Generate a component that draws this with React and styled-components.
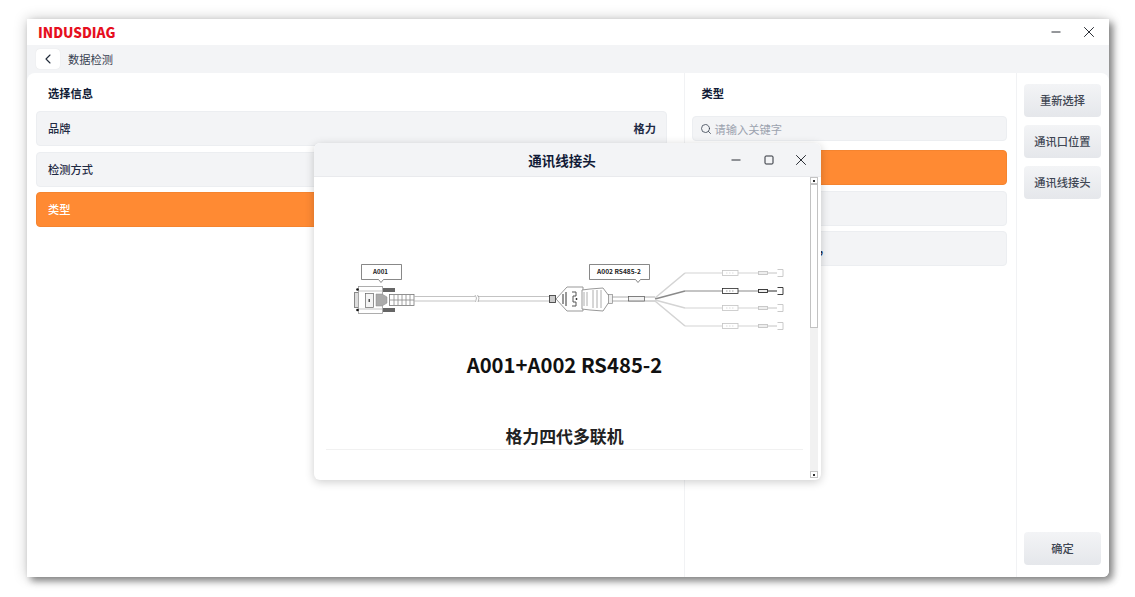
import React from 'react';
import styled, { createGlobalStyle } from 'styled-components';
import { ChevronLeft, Search } from 'lucide-react';

const GlobalStyle = createGlobalStyle`
  html, body {
    margin: 0;
    padding: 0;
    background: #fff;
    font-family: "Noto Sans CJK SC", "Noto Sans", sans-serif;
  }
  * { box-sizing: border-box; }
`;

const Page = styled.div`
  width: 1135px;
  height: 597px;
  padding: 19px 0 0 27px;
  overflow: hidden;
`;

const Window = styled.div`
  position: relative;
  width: 1082px;
  height: 558px;
  display: flex;
  flex-direction: column;
  background: #f3f4f6;
  border-radius: 0 0 6px 0;
  box-shadow: 4px 4px 7px rgba(0, 0, 0, 0.42), 0 0 14px rgba(0, 0, 0, 0.22);
`;

const TitleBar = styled.div`
  height: 26px;
  display: flex;
  align-items: center;
  justify-content: space-between;
  padding: 0 14px 0 11px;
  background: #fff;
`;

const Logo = styled.div`
  font-size: 13.6px;
  line-height: 24px;
  font-weight: 900;
  color: #e60f1e;
`;

const WinControls = styled.div`
  display: flex;
  align-items: center;
  gap: ${(p) => p.$gap}px;
`;

const WinIcon = styled.svg`
  display: block;
  width: 12px;
  height: 12px;
  fill: none;
  stroke: #2b2f36;
  stroke-width: 1;
`;

const SubBar = styled.div`
  height: 28px;
  display: flex;
  align-items: center;
  gap: 8px;
  padding: 0 0 0 9px;
`;

const BackButton = styled.div`
  width: 24px;
  height: 20px;
  display: flex;
  align-items: center;
  justify-content: center;
  background: #fff;
  border-radius: 4px;
  color: #1f2937;
  box-shadow: 0 0 1px rgba(0, 0, 0, 0.12);
`;

const SubTitle = styled.div`
  font-size: 11.25px;
  color: #374151;
`;

const Main = styled.div`
  flex: 1;
  display: flex;
  background: #fff;
  border-radius: 8px 8px 6px 0;
`;

const Panel = styled.div`
  width: ${(p) => p.$width}px;
  padding: ${(p) => p.$padding};
  border-right: 1px solid #f1f2f4;
`;

const Heading = styled.div`
  height: ${(p) => p.$height}px;
  padding: 1px 0 ${(p) => p.$height - 38}px ${(p) => p.$indent}px;
  display: flex;
  align-items: center;
  font-size: 11.25px;
  font-weight: 700;
  color: #111b36;
`;

const List = styled.div`
  display: flex;
  flex-direction: column;
  gap: 5.5px;
`;

const Row = styled.div`
  height: 35px;
  display: flex;
  align-items: center;
  justify-content: space-between;
  padding: 0 10px 1px 11px;
  border-radius: 4px;
  font-size: 11.25px;
  font-weight: 500;
  color: ${(p) => (p.$active ? '#fff' : '#1f2a44')};
  background: ${(p) => (p.$active ? '#ff8a33' : '#f3f4f6')};
  border: 1px solid ${(p) => (p.$active ? '#f5842f' : '#eceef1')};
`;

const RowValue = styled.span`
  font-weight: 700;
`;

const HiddenTail = styled.span`
  padding-left: 116px;
  color: #1f2a44;
  font-weight: 700;
`;

const SearchBox = styled.div`
  height: 25px;
  margin-bottom: 9px;
  display: flex;
  align-items: center;
  gap: 3px;
  padding: 0 7px;
  background: #f3f4f6;
  border: 1px solid #eceef1;
  border-radius: 4px;
  color: #374151;
  font-size: 11.25px;
`;

const Placeholder = styled.span`
  color: #9ca3af;
`;

const Actions = styled.div`
  flex: 1;
  display: flex;
  flex-direction: column;
  gap: 8.5px;
  padding: 11px 8px 12.5px 7px;
`;

const ActionButton = styled.div`
  height: 32.5px;
  flex-shrink: 0;
  display: flex;
  align-items: center;
  justify-content: center;
  margin-top: ${(p) => (p.$bottom ? 'auto' : '0')};
  border-radius: 4px;
  background: linear-gradient(180deg, #f3f4f6 0%, #e5e7eb 100%);
  font-size: 11.25px;
  font-weight: 500;
  color: #3f4653;
`;

const Modal = styled.div`
  position: absolute;
  left: 287px;
  top: 124px;
  width: 507px;
  height: 337px;
  display: flex;
  flex-direction: column;
  background: #fff;
  border-radius: 6px;
  overflow: hidden;
  box-shadow: 0 2px 10px rgba(0, 0, 0, 0.2);
`;

const ModalHeader = styled.div`
  position: relative;
  height: 34px;
  flex-shrink: 0;
  display: flex;
  align-items: center;
  justify-content: flex-end;
  padding-right: 14px;
  background: #f3f4f6;
  border-bottom: 1px solid #e9eaed;
`;

const ModalTitle = styled.div`
  position: absolute;
  left: 0;
  right: 11px;
  text-align: center;
  font-size: 13.5px;
  font-weight: 700;
  color: #111b36;
`;

const ModalBody = styled.div`
  flex: 1;
  display: flex;
  padding-right: 3px;
`;

const Doc = styled.div`
  flex: 1;
  display: flex;
  flex-direction: column;
  align-items: center;
  padding: 82px 7px 0 12px;
`;

const Diagram = styled.svg`
  display: block;
  width: 440px;
  height: 75px;
  margin-left: 11px;
  flex-shrink: 0;
`;

const CableTitle = styled.div`
  margin-top: 16px;
  font-size: 20.25px;
  line-height: 30px;
  font-weight: 700;
  color: #111;
`;

const BrandTitle = styled.div`
  width: 100%;
  margin-top: 43px;
  padding-bottom: 1px;
  text-align: center;
  font-size: 16.9px;
  line-height: 25px;
  font-weight: 700;
  color: #222;
  border-bottom: 1px solid #f1f1f1;
`;

const Scrollbar = styled.div`
  width: 8px;
  margin-bottom: 2px;
  display: flex;
  flex-direction: column;
  background: #f1f1f1;
`;

const ScrollArrow = styled.div`
  width: 8px;
  height: 7px;
  flex-shrink: 0;
  margin-top: ${(p) => (p.$end ? 'auto' : '0')};
  display: flex;
  align-items: center;
  justify-content: center;
  background: #fff;
  border: 1px solid #c4c4c4;
  &::after {
    content: '';
    width: 2px;
    height: 2px;
    background: #333;
  }
`;

const ScrollThumb = styled.div`
  height: 144px;
  flex-shrink: 0;
  background: #fff;
  border: 1px solid #c2c2c2;
`;

const Minimize = () => (
  <WinIcon viewBox="0 0 12 12"><path d="M1.5 6h9" /></WinIcon>
);
const Maximize = () => (
  <WinIcon viewBox="0 0 12 12"><rect x="2" y="2" width="8" height="8" rx="1" /></WinIcon>
);
const Close = () => (
  <WinIcon viewBox="0 0 12 12"><path d="M1.2 1.2l9.6 9.6M10.8 1.2l-9.6 9.6" /></WinIcon>
);

const branches = [
  { y: 274, path: 'M655 299L685 274', stroke: '#d4d4d4', dark: '#c4c4c4' },
  { y: 292, path: 'M655 300L685 292', stroke: '#8a8a8a', dark: '#2a2a2a' },
  { y: 309, path: 'M655 301L685 309', stroke: '#d4d4d4', dark: '#c4c4c4' },
  { y: 327, path: 'M655 302L685 327', stroke: '#d4d4d4', dark: '#c4c4c4' },
];

const CableDrawing = () => (
  <Diagram viewBox="350 260 440 75" fill="none">
    {/* callouts */}
    <path d="M361.5 265.5h40v15h-18l-2.5 3-2.5-3h-17z" stroke="#555" strokeWidth="0.7" fill="#fff" />
    <text x="380.5" y="275" textAnchor="middle" fontSize="6.2" fontWeight="700" fill="#222">A001</text>
    <path d="M589.5 265.5h60v15h-9l-2.5 3-2.5-3h-46z" stroke="#555" strokeWidth="0.7" fill="#fff" />
    <text x="619" y="275" textAnchor="middle" fontSize="6.6" fontWeight="700" fill="#222">A002 RS485-2</text>

    {/* DB9 plug */}
    <rect x="354.5" y="293.5" width="4.5" height="15" stroke="#888" strokeWidth="1" fill="#ddd" />
    <rect x="358.5" y="287.5" width="24" height="27" stroke="#999" strokeWidth="0.8" fill="#fff" />
    <path d="M359 292h24M359 310h24" stroke="#aaa" strokeWidth="0.7" />
    <rect x="365.5" y="294.5" width="8" height="14" stroke="#666" strokeWidth="0.7" fill="#f4f4f4" />
    <rect x="368.5" y="300" width="1.5" height="3" fill="#555" />
    <circle cx="357.5" cy="290.5" r="1.3" fill="#111" />
    <circle cx="357.5" cy="311" r="1.3" fill="#111" />
    <path d="M376 295h6l5 3v6l-5 3h-6z" fill="#aaa" stroke="#888" strokeWidth="0.5" />
    <rect x="383" y="289" width="12" height="4" fill="#666" />
    <rect x="383" y="309" width="12" height="4" fill="#666" />
    <rect x="389.5" y="295.5" width="24.5" height="11" stroke="#777" strokeWidth="0.8" fill="#fff" />
    <path d="M394 296v10M398 296v10M402 296v10M406 296v10M410 296v10M390 301h24" stroke="#888" strokeWidth="0.8" />

    {/* main cable */}
    <path d="M414 297.5h61M414 302h61M478 297.5h72M478 302h72" stroke="#b4b4b4" strokeWidth="0.8" />
    <path d="M475 296l1.5 3-1 4M477.5 296l1.5 3-1 4" stroke="#888" strokeWidth="0.6" />

    {/* splitter */}
    <rect x="549.5" y="296.5" width="6" height="7" stroke="#444" strokeWidth="0.9" fill="#ccc" />
    <path d="M556 300l11-12 16 0 0 24-16 0z" stroke="#999" strokeWidth="1" fill="#fff" />
    <path d="M563 295v10M566 293v14" stroke="#333" strokeWidth="1" />
    <path d="M572 293h4v4h-3v6h3v4h-4" stroke="#555" strokeWidth="1" />
    <circle cx="576.5" cy="300" r="0.9" fill="#222" />
    <path d="M582 291l8-1 13-1 6 8v6l-6 9-13-1-8-1z" stroke="#999" strokeWidth="1" fill="#fff" />
    <path d="M584 293v14M587 293v14M593 291v18M597 291v18M601 291v18" stroke="#999" strokeWidth="0.8" />
    <rect x="608.5" y="295.5" width="4" height="9" stroke="#888" strokeWidth="0.7" fill="#eee" />
    <path d="M612 298h43M612 302h43" stroke="#999" strokeWidth="0.8" />
    <rect x="628.5" y="297.5" width="16" height="4.5" stroke="#555" strokeWidth="0.7" fill="#f2f2f2" />

    {/* fan-out */}
    {branches.map((b) => (
      <g key={b.y}>
        <path d={b.path} stroke={b.stroke} strokeWidth="1.6" />
        <path d={`M685 ${b.y}H722M738 ${b.y}H758`} stroke={b.stroke} strokeWidth="1.2" />
        <rect x="722.5" y={b.y - 2.5} width="15.5" height="5" stroke={b.dark} strokeWidth="0.8" fill="#fff" />
        <path d={`M726 ${b.y}h8`} stroke={b.stroke} strokeWidth="0.8" strokeDasharray="1.5 1.5" />
        <rect x="758.5" y={b.y - 1.5} width="9" height="3" stroke={b.dark} strokeWidth="0.9" fill="#eee" />
        <path d={`M768 ${b.y}h9`} stroke={b.dark} strokeWidth="1" />
        <path d={`M777.5 ${b.y - 3.5}h5.5v7h-5.5`} stroke={b.dark} strokeWidth="0.9" />
      </g>
    ))}
  </Diagram>
);

export default function App() {
  return (
    <Page>
      <GlobalStyle />
      <Window>
        <TitleBar>
          <Logo>INDUSDIAG</Logo>
          <WinControls $gap={21}>
            <Minimize />
            <Close />
          </WinControls>
        </TitleBar>
        <SubBar>
          <BackButton><ChevronLeft size={16} strokeWidth={1.6} /></BackButton>
          <SubTitle>数据检测</SubTitle>
        </SubBar>
        <Main>
          <Panel $width={658} $padding="0 17px 0 9px">
            <Heading $height={38} $indent={12}>选择信息</Heading>
            <List>
              <Row><span>品牌</span><RowValue>格力</RowValue></Row>
              <Row><span>检测方式</span></Row>
              <Row $active><span>类型</span></Row>
            </List>
          </Panel>
          <Panel $width={332} $padding="0 9px 0 6.5px">
            <Heading $height={43} $indent={10}>类型</Heading>
            <SearchBox>
              <Search size={12} strokeWidth={1.6} />
              <Placeholder>请输入关键字</Placeholder>
            </SearchBox>
            <List>
              <Row $active />
              <Row />
              <Row><HiddenTail>,</HiddenTail></Row>
            </List>
          </Panel>
          <Actions>
            <ActionButton>重新选择</ActionButton>
            <ActionButton>通讯口位置</ActionButton>
            <ActionButton>通讯线接头</ActionButton>
            <ActionButton $bottom>确定</ActionButton>
          </Actions>
        </Main>
        <Modal>
          <ModalHeader>
            <ModalTitle>通讯线接头</ModalTitle>
            <WinControls $gap={20.5}>
              <Minimize />
              <Maximize />
              <Close />
            </WinControls>
          </ModalHeader>
          <ModalBody>
            <Doc>
              <CableDrawing />
              <CableTitle>A001+A002 RS485-2</CableTitle>
              <BrandTitle>格力四代多联机</BrandTitle>
            </Doc>
            <Scrollbar>
              <ScrollArrow />
              <ScrollThumb />
              <ScrollArrow $end />
            </Scrollbar>
          </ModalBody>
        </Modal>
      </Window>
    </Page>
  );
}
